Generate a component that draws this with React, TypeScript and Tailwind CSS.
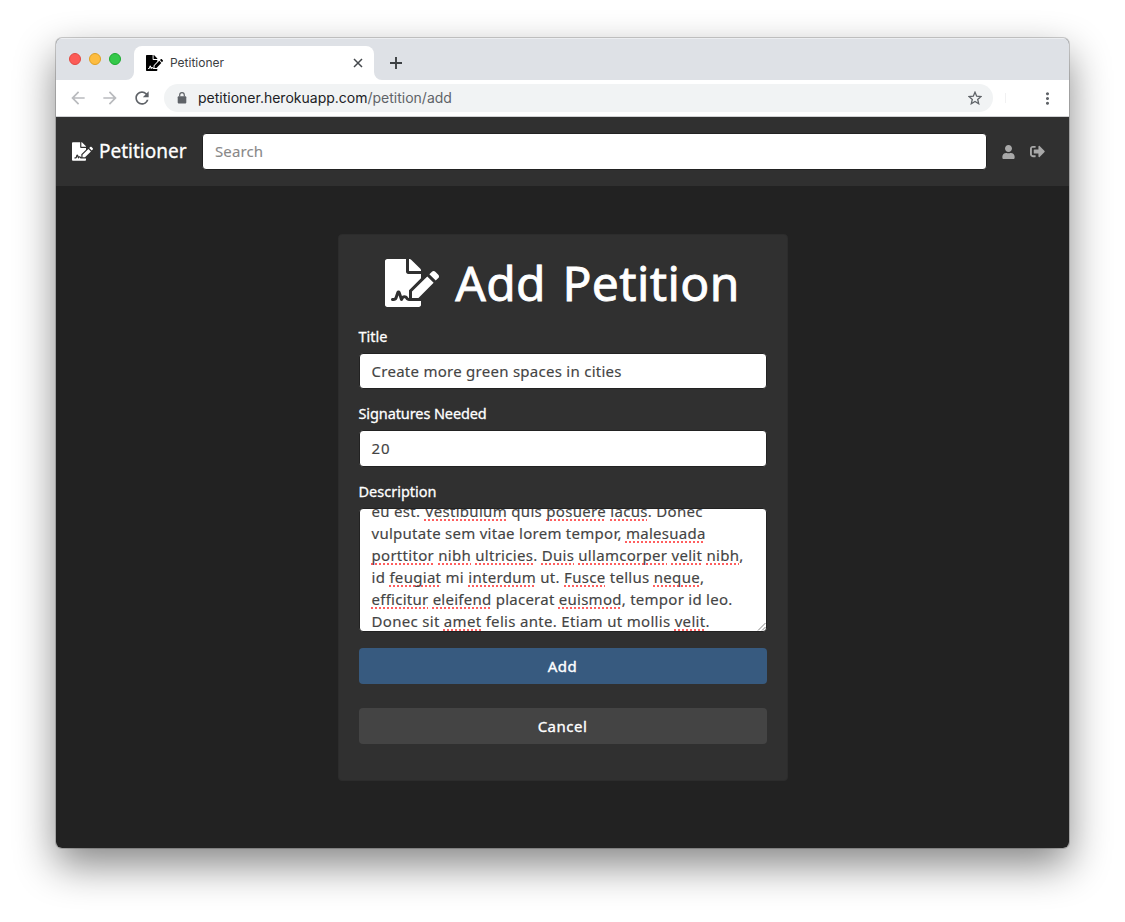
import type { ReactNode } from 'react';
import { FaFileSignature, FaUser, FaSignOutAlt } from 'react-icons/fa';
import { MdArrowBack, MdArrowForward, MdRefresh, MdMoreVert } from 'react-icons/md';

function Misspelled({ children }: { children: ReactNode }) {
  return (
    <span className="underline decoration-[#ff5e5e] decoration-dotted decoration-[2.4px] underline-offset-[1.5px] [text-decoration-skip-ink:none]">
      {children}
    </span>
  );
}

function Line({ children, className }: { children: ReactNode; className: string }) {
  return <div className={`h-[22px] leading-[22px] whitespace-nowrap ${className}`}>{children}</div>;
}

function Label({ children, className }: { children: ReactNode; className: string }) {
  return (
    <div className={`h-[22px] text-[14.5px] leading-[22px] text-white [-webkit-text-stroke:0.3px_white] ${className}`}>
      {children}
    </div>
  );
}

function Field({ children, className }: { children: ReactNode; className: string }) {
  return (
    <div className={`flex items-center rounded-[4px] border border-[#222] bg-white px-3 text-[15px] text-[#444] [-webkit-text-stroke:0.15px_#444] ${className}`}>
      {children}
    </div>
  );
}

function TabStrip() {
  return (
    <div className="flex h-[42px] items-start bg-[#dee1e6] shadow-[inset_0_1px_0_#eceef1]">
      <div className="flex gap-2 pt-[15px] pl-[13px]">
        <div className="size-3 rounded-full border border-[#e14942] bg-[#fc5b57]" />
        <div className="size-3 rounded-full border border-[#dfa023] bg-[#fdbc40]" />
        <div className="size-3 rounded-full border border-[#1ba930] bg-[#34c84a]" />
      </div>
      <div className="relative mt-2 ml-[13px] flex h-[34px] w-[240px] items-center rounded-t-lg bg-white pr-[11px] pl-3">
        <svg className="absolute bottom-0 -left-2" width="8" height="8" viewBox="0 0 8 8"><path d="M8 0v8H0a8 8 0 0 0 8-8" fill="#fff" /></svg>
        <svg className="absolute -right-2 bottom-0" width="8" height="8" viewBox="0 0 8 8"><path d="M0 0v8h8a8 8 0 0 1-8-8" fill="#fff" /></svg>
        <FaFileSignature className="h-4 w-[17px] text-black" preserveAspectRatio="none" />
        <span className="ml-[7px] flex-1 font-['Inter',sans-serif] text-[12px] text-[#3c4043]">Petitioner</span>
        <svg width="10" height="10" viewBox="0 0 10 10"><path d="M1 1l8 8M9 1L1 9" stroke="#45494d" strokeWidth="1.5" /></svg>
      </div>
      <svg className="mt-[19px] ml-4" width="12" height="12" viewBox="0 0 12 12"><path d="M6 0v12M0 6h12" stroke="#3c4043" strokeWidth="1.9" /></svg>
    </div>
  );
}

function Toolbar() {
  return (
    <div className="flex h-[37px] items-center border-b border-[#d0d1d3] bg-white pl-[12px] text-[#5f6368]">
      <MdArrowBack className="size-5 text-[#b9bbbe]" />
      <MdArrowForward className="ml-3 size-5 text-[#b9bbbe]" />
      <MdRefresh className="ml-[12px] size-[20px]" />
      <div className="ml-[12px] flex h-7 w-[829px] items-center rounded-full bg-[#f1f3f4] pr-[11px] pl-[13px]">
        <svg width="10" height="12" viewBox="0 0 10 12">
          <rect x="0.7" y="4.2" width="8.6" height="7.3" rx="1" fill="#5f6368" />
          <path d="M2.7 4.5V2.9a2.3 2.3 0 0 1 4.6 0v1.6" fill="none" stroke="#5f6368" strokeWidth="1.2" />
        </svg>
        <div className="-mt-px ml-[11px] flex-1 font-['Inter',sans-serif] text-[14px]">
          <span className="text-[#202124]">petitioner.herokuapp.com</span>
          <span>/petition/add</span>
        </div>
        <svg width="14" height="14" viewBox="0 0 14 14">
          <path d="M7 1.2l1.7 4 4.3.4-3.3 2.8 1 4.3L7 10.4l-3.7 2.3 1-4.3L1 5.600l4.300-.4z" fill="none" stroke="#5f6368" strokeWidth="1.3" />
        </svg>
      </div>
      <div className="ml-3 h-[10px] w-px bg-[#f1f1f2]" />
      <MdMoreVert className="ml-[32px] size-[19px]" />
    </div>
  );
}

export default function App() {
  return (
    <div className="h-[922px] w-[1125px] overflow-hidden bg-white pt-[38px] pl-[56px] font-['Noto_Sans',sans-serif]">
      <div className="h-[810px] w-[1013px] rounded-[6px] shadow-[0_0_0_1px_rgba(0,0,0,0.18),0_17px_40px_rgba(0,0,0,0.48)]">
        <div className="flex h-full flex-col overflow-hidden rounded-[6px] bg-[#222]">
          <TabStrip />
          <Toolbar />
          <nav className="flex h-[69px] items-center bg-[#303030] pl-4 text-white">
            <FaFileSignature className="h-[19px] w-[21px]" />
            <span className="ml-[6px] w-[87px] text-[19px] [-webkit-text-stroke:0.3px_white]">Petitioner</span>
            <div className="ml-4 flex h-[37px] w-[785px] items-center rounded-[4px] border border-[#222] bg-white px-3 text-[15px] tracking-[0.1px] text-[#888] [-webkit-text-stroke:0.1px_#888]">
              Search
            </div>
            <FaUser className="ml-[15px] h-[14px] w-[13px] text-[#a8a8a8]" />
            <FaSignOutAlt className="ml-[15px] size-[15px] text-[#a8a8a8]" />
          </nav>
          <main className="flex flex-1 justify-center pt-[48px]">
            <div className="flex h-[547px] w-[450px] flex-col rounded-[4px] border border-[#2c2c2c] bg-[#303030] px-5 pt-[19px]">
              <h1 className="flex h-[58px] items-center justify-center text-[48px] leading-[58px] tracking-[0.4px] whitespace-nowrap text-white [-webkit-text-stroke:0.8px_white] [word-spacing:3.5px]">
                <FaFileSignature className="mr-4 h-12 w-[54px] shrink-0" strokeWidth={0} />
                Add Petition
              </h1>
              <Label className="mt-[13px] mb-[6px]">Title</Label>
              <Field className="h-9 tracking-[0.267px]">Create more green spaces in cities</Field>
              <Label className="mt-[13px] mb-[6px] tracking-[-0.1px]">Signatures Needed</Label>
              <Field className="h-[37px] tracking-[1px]">20</Field>
              <Label className="mt-[13px] mb-[6px]">Description</Label>
              <div className="relative h-[124px] overflow-hidden rounded-[4px] border border-[#222] bg-white px-3 text-[15px] text-[#444] [-webkit-text-stroke:0.15px_#444]">
                <div className="-mt-[9px]">
                  <Line className="tracking-[0.313px]">eu est. <Misspelled>Vestibulum</Misspelled> quis <Misspelled>posuere</Misspelled> <Misspelled>lacus</Misspelled>. Donec</Line>
                  <Line className="tracking-[0.27px]">vulputate sem vitae lorem tempor, <Misspelled>malesuada</Misspelled></Line>
                  <Line className="tracking-[0.29px]"><Misspelled>porttitor</Misspelled> <Misspelled>nibh</Misspelled> <Misspelled>ultricies</Misspelled>. <Misspelled>Duis</Misspelled> <Misspelled>ullamcorper</Misspelled> <Misspelled>velit</Misspelled> <Misspelled>nibh</Misspelled>,</Line>
                  <Line className="tracking-[0.3px]">id <Misspelled>feugiat</Misspelled> mi <Misspelled>interdum</Misspelled> ut. <Misspelled>Fusce</Misspelled> tellus <Misspelled>neque</Misspelled>,</Line>
                  <Line className="tracking-[0.26px]"><Misspelled>efficitur</Misspelled> <Misspelled>eleifend</Misspelled> placerat <Misspelled>euismod</Misspelled>, tempor id leo.</Line>
                  <Line className="tracking-[0.313px]">Donec sit <Misspelled>amet</Misspelled> felis ante. Etiam ut mollis <Misspelled>velit</Misspelled>.</Line>
                </div>
                <svg className="absolute right-0 bottom-0" width="9" height="9" viewBox="0 0 9 9"><path d="M1 8.500 8.500 1M5 8.500 8.500 5" stroke="#777" strokeWidth="0.9" /></svg>
              </div>
              <button className="mt-4 h-9 rounded-[4px] bg-[#375a7f] text-[15px] tracking-[0.5px] text-white [-webkit-text-stroke:0.35px_white]">Add</button>
              <button className="mt-6 h-9 rounded-[4px] bg-[#444] text-[15px] tracking-[0.5px] text-white [-webkit-text-stroke:0.35px_white]">Cancel</button>
            </div>
          </main>
        </div>
      </div>
    </div>
  );
}
